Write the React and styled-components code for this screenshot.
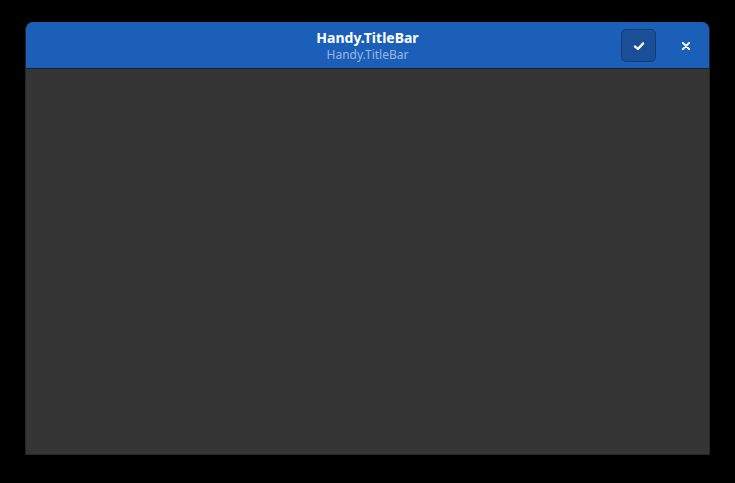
import React from 'react';
import styled, { createGlobalStyle } from 'styled-components';

const GlobalStyle = createGlobalStyle`
  html, body {
    margin: 0;
    padding: 0;
    background: #000;
    font-family: "Noto Sans", "Open Sans", sans-serif;
  }
`;

const Screen = styled.div`
  width: 735px;
  height: 483px;
  box-sizing: border-box;
  padding: 22px 25px 28px 25px;
  display: flex;
`;

const Window = styled.div`
  flex: 1;
  display: flex;
  flex-direction: column;
  border: 1px solid #262626;
  border-top: none;
  border-radius: 8px 8px 0 0;
  overflow: hidden;
  background: #353535;
`;

const TitleBar = styled.header`
  position: relative;
  height: 46px;
  flex-shrink: 0;
  display: flex;
  align-items: center;
  justify-content: center;
  background: #1c5fb9;
  border-bottom: 1px solid #0f2440;
`;

const Titles = styled.div`
  display: flex;
  flex-direction: column;
  align-items: center;
  line-height: 1;
`;

const Title = styled.span`
  color: #ffffff;
  font-size: 14px;
  font-weight: 700;
  margin-top: 1px;
`;

const Subtitle = styled.span`
  color: #9ab6e0;
  font-size: 12px;
  margin-top: 4px;
`;

const Actions = styled.div`
  position: absolute;
  right: 11px;
  top: 7px;
  display: flex;
  align-items: center;
  gap: 18px;
`;

const IconButton = styled.button`
  width: ${({ boxed }) => (boxed ? '35px' : '24px')};
  height: 33px;
  padding: 0;
  display: flex;
  align-items: center;
  justify-content: center;
  border-radius: 5px;
  border: 1px solid ${({ boxed }) => (boxed ? '#123d73' : 'transparent')};
  background: ${({ boxed }) => (boxed ? '#1a4f98' : 'transparent')};
  color: #fff;
`;

const Body = styled.main`
  flex: 1;
  background: #353535;
`;

const Check = () => (
  <svg width="12" height="12" viewBox="0 0 16 16">
    <path d="M2.5 8.5 L6.5 12 L13.5 4.5" fill="none" stroke="#fff" strokeWidth="3" strokeLinecap="round" strokeLinejoin="round" />
  </svg>
);

const Close = () => (
  <svg width="10" height="10" viewBox="0 0 16 16">
    <path d="M3 3 L13 13 M13 3 L3 13" fill="none" stroke="#fff" strokeWidth="3.2" strokeLinecap="round" />
  </svg>
);

const App = () => (
  <>
    <GlobalStyle />
    <Screen>
      <Window>
        <TitleBar>
          <Titles>
            <Title>Handy.TitleBar</Title>
            <Subtitle>Handy.TitleBar</Subtitle>
          </Titles>
          <Actions>
            <IconButton boxed>
              <Check />
            </IconButton>
            <IconButton>
              <Close />
            </IconButton>
          </Actions>
        </TitleBar>
        <Body />
      </Window>
    </Screen>
  </>
);

export default App;
